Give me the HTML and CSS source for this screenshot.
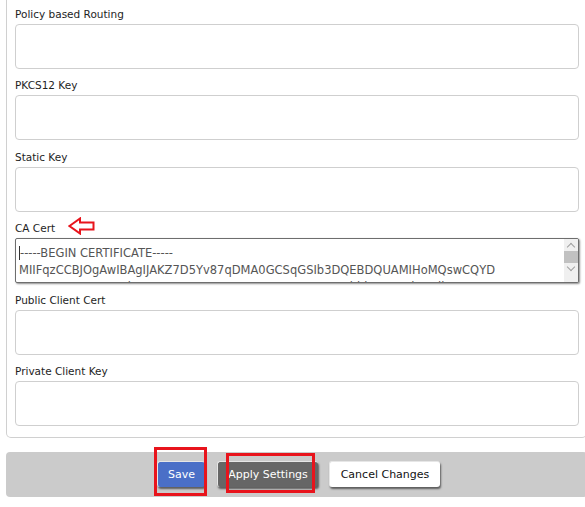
FILE: index.html
```html
<!DOCTYPE html>
<html lang="en">
<head>
<meta charset="utf-8">
<title>VPN Settings</title>
<link rel="stylesheet" href="styles.css">
</head>
<body>
<div class="panel">
  <div class="field first">
    <label class="field-label">Policy based Routing</label>
    <div class="input"></div>
  </div>
  <div class="field">
    <label class="field-label">PKCS12 Key</label>
    <div class="input"></div>
  </div>
  <div class="field">
    <label class="field-label">Static Key</label>
    <div class="input"></div>
  </div>
  <div class="field">
    <label class="field-label">CA Cert
      <svg class="pointer" width="27" height="18" viewBox="0 0 27 18"><polygon points="1.5,9 12,1.5 12,5.5 25.5,5.5 25.5,12.5 12,12.5 12,16.5" fill="#fff" stroke="#e8141c" stroke-width="2" stroke-linejoin="miter"/></svg>
    </label>
    <div class="textarea">
      <div class="textarea-text"><span class="caret"></span>-----BEGIN CERTIFICATE-----<br>MIIFqzCCBJOgAwIBAgIJAKZ7D5Yv87qDMA0GCSqGSIb3DQEBDQUAMIHoMQswCQYD<br>VQQGEwJVUzELMAkGA1UECBMCQ0ExFTATBgNVBAcTDFNhbkZyYW5jaXNjbzEVMBMG</div>
      <div class="scrollbar">
        <span class="sb-arrow up"></span>
        <span class="sb-thumb"></span>
        <span class="sb-arrow down"></span>
      </div>
    </div>
  </div>
  <div class="field">
    <label class="field-label">Public Client Cert</label>
    <div class="input"></div>
  </div>
  <div class="field">
    <label class="field-label">Private Client Key</label>
    <div class="input"></div>
  </div>
</div>

<div class="actions">
  <div class="btn-wrap">
    <button class="btn btn-save">Save</button>
    <span class="mark mark-save"></span>
  </div>
  <div class="btn-wrap">
    <button class="btn btn-apply">Apply Settings</button>
    <span class="mark mark-apply"></span>
  </div>
  <button class="btn btn-cancel">Cancel Changes</button>
</div>
</body>
</html>
```

FILE: styles.css
```css
* { box-sizing: border-box; }

body {
  margin: 0;
  width: 585px;
  height: 507px;
  overflow: hidden;
  background: #fff;
  font-family: "DejaVu Sans", Verdana, sans-serif;
  color: #222;
}

/* form panel, open at the top */
.panel {
  margin-left: 6px;
  width: 581px;
  border: 1px solid #d0d0d0;
  border-top: none;
  border-radius: 0 0 5px 5px;
  padding: 0 7px 11px 8px;
}

.field { padding-top: 8.4px; }
.field.first { padding-top: 6px; }

.field-label {
  display: flex;
  align-items: center;
  height: 16px;
  margin-bottom: 2px;
  font-size: 10.5px;
  color: #1e1e1e;
}

.pointer {
  margin-left: 13px;
  margin-top: -4px;
}

.input {
  height: 45px;
  border: 1px solid #cfcfcf;
  border-radius: 4px;
  background: #fff;
}

/* certificate box with its own scrollbar */
.textarea {
  position: relative;
  height: 45px;
  border: 1px solid #6e6e6e;
  border-radius: 2px;
  box-shadow: 1px 1px 2px rgba(0, 0, 0, 0.45);
  overflow: hidden;
  background: #fff;
}

.textarea-text {
  padding: 6px 0 0 3px;
  font-size: 11.5px;
  line-height: 17px;
  color: #555;
  white-space: nowrap;
}

.caret {
  display: inline-block;
  width: 1px;
  height: 14px;
  background: #333;
  vertical-align: -3px;
}

.scrollbar {
  position: absolute;
  top: 0;
  right: 0;
  width: 14px;
  height: 100%;
  background: #f0f0f0;
  display: flex;
  flex-direction: column;
  align-items: center;
}

.sb-arrow {
  width: 14px;
  height: 12px;
  position: relative;
}
.sb-arrow::before {
  content: "";
  position: absolute;
  left: 4px;
  width: 5px;
  height: 5px;
  border-left: 1px solid #a0a0a0;
  border-top: 1px solid #a0a0a0;
}
.sb-arrow.up::before { top: 5px; transform: rotate(45deg); }
.sb-arrow.down::before { top: 1px; transform: rotate(-135deg); }

.sb-thumb {
  width: 14px;
  height: 12px;
  background: #c1c1c1;
}

/* action bar */
.actions {
  margin: 14px 0 0 6px;
  width: 581px;
  height: 45px;
  background: #cbcbcb;
  border-radius: 4px;
  display: flex;
  align-items: center;
  padding-left: 151px;
  gap: 12px;
}

.btn-wrap { position: relative; display: flex; }

.btn {
  height: 26px;
  border: none;
  border-top: 1px solid #e6e6e6;
  border-left: 1px solid #e6e6e6;
  border-radius: 3px;
  box-shadow: 1px 2px 2px rgba(0, 0, 0, 0.55);
  font-family: inherit;
  font-size: 11px;
  padding: 0;
  margin: 0;
  cursor: pointer;
}

.btn-save { width: 48px; background: #4a6fc7; color: #fff; }
.btn-apply { width: 101px; background: #666; color: #fff; }
.btn-cancel { width: 111px; background: #fff; color: #111; margin-left: -1px; }

/* red highlight frames drawn over the buttons */
.mark {
  position: absolute;
  border: 3px solid #e8141c;
  pointer-events: none;
}
.mark-save { left: -3px; top: -14px; width: 53px; height: 49px; }
.mark-apply { left: 9px; top: -8px; width: 89px; height: 40px; }
```
